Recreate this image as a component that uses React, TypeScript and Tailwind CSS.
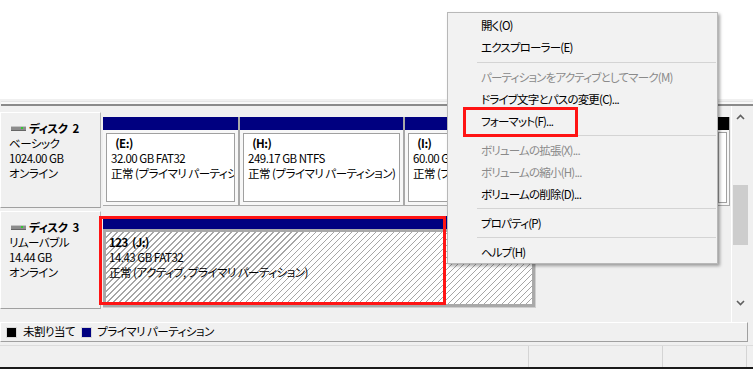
import type { ReactNode } from "react";

const hatch =
  "bg-[repeating-linear-gradient(135deg,#ffffff_0px,#ffffff_3.3px,#a6a6a6_3.3px,#a6a6a6_4.25px)]";

function DiskIcon() {
  return (
    <svg width="16" height="7" viewBox="0 0 16 7" className="shrink-0">
      <rect x="0" y="1" width="15" height="5" fill="#8c8c8c" />
      <rect x="0" y="1" width="15" height="1" fill="#c4c4c4" />
      <rect x="0" y="5" width="15" height="1" fill="#666666" />
      <rect x="10" y="2" width="2" height="2" fill="#34c934" />
    </svg>
  );
}

function DiskLabel({ name, num, kind, size, status }: { name: string; num: string; kind: string; size: string; status: string }) {
  return (
    <div className="w-[101px] shrink-0 border-t border-l border-white border-r border-b border-r-[#b4b4b4] border-b-[#a0a0a0] pl-[8px] pt-[8px] text-[11.5px] tracking-[-0.5px] leading-[15px] text-black">
      <div className="flex items-center gap-[2px] pl-[2px] font-bold">
        <DiskIcon />
        <span>{name}</span>
        <span className="ml-[3px]">{num}</span>
      </div>
      <div>{kind}</div>
      <div>{size}</div>
      <div>{status}</div>
    </div>
  );
}

function Partition({
  width,
  title,
  size,
  state,
}: {
  width: string;
  title: string;
  size: string;
  state: string;
}) {
  return (
    <div className={`${width} shrink-0 flex flex-col border-r-2 border-b border-[#a9a9a9]`}>
      <div className="h-[13px] bg-[#000080]" />
      <div className="flex-1 p-[3px] bg-[#f7f7f7]">
        <div className="h-full bg-white border border-[#a0a0a0] pl-[4px] pt-[2px] overflow-hidden whitespace-nowrap text-[11.5px] tracking-[-0.5px] leading-[15px] text-black">
          <div className="font-bold">&nbsp;&nbsp;{title}</div>
          <div>{size}</div>
          <div>{state}</div>
        </div>
      </div>
    </div>
  );
}

function MenuItem({ children, disabled }: { children: ReactNode; disabled?: boolean }) {
  return (
    <div
      className={`h-[22px] leading-[22px] pl-[33px] text-[11.5px] tracking-[-0.8px] whitespace-nowrap ${
        disabled ? "text-[#8a8a8a]" : "text-black"
      }`}
    >
      {children}
    </div>
  );
}

function Sep({ h = "h-[7px]" }: { h?: string }) {
  return (
    <div className={`${h} flex items-center pl-[29px] pr-[1px]`}>
      <div className="h-px w-full bg-[#d4d4d4]" />
    </div>
  );
}

export default function App() {
  return (
    <div className="relative w-[753px] h-[369px] overflow-hidden bg-[#f0f0f0] font-[family-name:'Noto_Sans_CJK_JP','Noto_Sans',sans-serif] [font-feature-settings:'palt']">
      {/* volume list (top pane) */}
      <div className="h-[99px] bg-white" />
      {/* splitter */}
      <div className="h-[7px] bg-[#f0f0f0] flex flex-col">
        <div className="h-[2px]" />
        <div className="flex-1 ml-[1px] bg-[#f8f8f8] border-t border-[#e4e4e4] border-b-2 border-b-[#8a8a8a]" />
      </div>

      {/* disk list (bottom pane) */}
      <div className="h-[216px] flex">
        <div className="w-[731px] flex flex-col gap-[3px] pt-[6px]">
          {/* Disk 2 */}
          <div className="h-[96px] flex gap-[2px]">
            <DiskLabel name="ディスク" num="2" kind="ベーシック" size="1024.00 GB" status="オンライン" />
            <div className="flex pt-[5px] pb-[2px]">
              <Partition width="w-[137px]" title="(E:)" size="32.00 GB FAT32" state="正常 (プライマリ パーティション)" />
              <Partition width="w-[165px]" title="(H:)" size="249.17 GB NTFS" state="正常 (プライマリ パーティション)" />
              <Partition width="w-[311px]" title="(I:)" size="60.00 GB NTFS" state="正常 (プライマリ パーティション)" />
              <div className="w-[14px] shrink-0 flex flex-col border-r border-b border-[#a9a9a9]">
                <div className="h-[13px] bg-black" />
                <div className="flex-1 p-[2px] bg-[#f7f7f7]">
                  <div className="h-full bg-white border border-[#a0a0a0]" />
                </div>
              </div>
            </div>
          </div>

          {/* Disk 3 */}
          <div className="h-[98px] flex gap-[2px]">
            <DiskLabel name="ディスク" num="3" kind="リムーバブル" size="14.44 GB" status="オンライン" />
            <div className="flex pt-[5px] pb-[1px]">
              <div className="w-[433px] flex flex-col border-r border-b border-[#cfcfcf]">
                <div className="h-[13px] bg-[#000080]" />
                <div className="flex-1 p-[3px] bg-[#a9a9a9]">
                  <div className={`h-full ${hatch} pl-[3px] pt-[3px] text-[11.5px] tracking-[-0.5px] leading-[15px] text-black whitespace-nowrap overflow-hidden`}>
                    <div className="font-bold">123&nbsp;&nbsp;(J:)</div>
                    <div>14.43 GB FAT32</div>
                    <div>正常 (アクティブ, プライマリ パーティション)</div>
                  </div>
                </div>
              </div>
            </div>
          </div>
        </div>

        {/* scrollbar */}
        <div className="w-[17px] border-l border-white bg-[#f0f0f0] flex flex-col items-center">
          <div className="h-[17px] flex items-end justify-center pb-[3px]">
            <svg width="9" height="6" viewBox="0 0 9 6">
              <path d="M1 5 L4.5 1.5 L8 5" fill="none" stroke="#606060" strokeWidth="1.6" />
            </svg>
          </div>
          <div className="h-[62px]" />
          <div className="w-[15px] h-[60px] bg-[#cdcdcd]" />
          <div className="flex-1" />
          <div className="h-[17px] flex items-start justify-center pt-[2px]">
            <svg width="9" height="6" viewBox="0 0 9 6">
              <path d="M1 1 L4.5 4.5 L8 1" fill="none" stroke="#606060" strokeWidth="1.6" />
            </svg>
          </div>
          <div className="h-[7px]" />
        </div>
      </div>

      {/* legend */}
      <div className="h-[20px] w-[748px] flex items-center gap-[6px] pl-[5px] border-t border-l border-white border-r border-b border-r-[#a0a0a0] border-b-[#a0a0a0] text-[11.5px] tracking-[-0.5px] text-black">
        <div className="flex items-center gap-[6px]">
          <div className="w-[11px] h-[11px] bg-black border border-[#d8d8d8]" />
          <span>未割り当て</span>
        </div>
        <div className="flex items-center gap-[5px]">
          <div className="w-[11px] h-[11px] bg-[#000080] border border-[#d8d8d8]" />
          <span>プライマリ パーティション</span>
        </div>
      </div>

      {/* status bar */}
      <div className="mt-[3px] h-[22px] flex border-t border-[#dcdcdc]">
        <div className="w-[529px] border-r border-[#d4d4d4]" />
        <div className="w-[134px] border-r border-[#d4d4d4]" />
        <div className="w-[84px] border-r border-[#d4d4d4]" />
        <div className="flex-1" />
      </div>
      <div className="h-[2px] bg-[#1a1a1a]" />

      {/* red annotation around the selected partition */}
      <div className="absolute left-[99px] top-[216px] w-[347px] h-[89px] border-[3px] border-[#ff1414]" />

      {/* context menu */}
      <div className="absolute left-[447px] top-[12px] w-[271px] h-[252px] bg-[#f2f2f2] border border-[#b8b8b8] shadow-[2px_2px_3px_rgba(0,0,0,0.35)] pt-[1px]">
        <MenuItem>開く(O)</MenuItem>
        <MenuItem>エクスプローラー(E)</MenuItem>
        <Sep h="h-[8px]" />
        <MenuItem disabled>パーティションをアクティブとしてマーク(M)</MenuItem>
        <MenuItem>ドライブ文字とパスの変更(C)...</MenuItem>
        <MenuItem>フォーマット(F)...</MenuItem>
        <Sep />
        <MenuItem disabled>ボリュームの拡張(X)...</MenuItem>
        <MenuItem disabled>ボリュームの縮小(H)...</MenuItem>
        <MenuItem>ボリュームの削除(D)...</MenuItem>
        <Sep />
        <MenuItem>プロパティ(P)</MenuItem>
        <Sep />
        <MenuItem>ヘルプ(H)</MenuItem>
        <div className="absolute left-[15px] top-[94px] w-[115px] h-[30px] border-[3px] border-[#ff1414]" />
      </div>
    </div>
  );
}
